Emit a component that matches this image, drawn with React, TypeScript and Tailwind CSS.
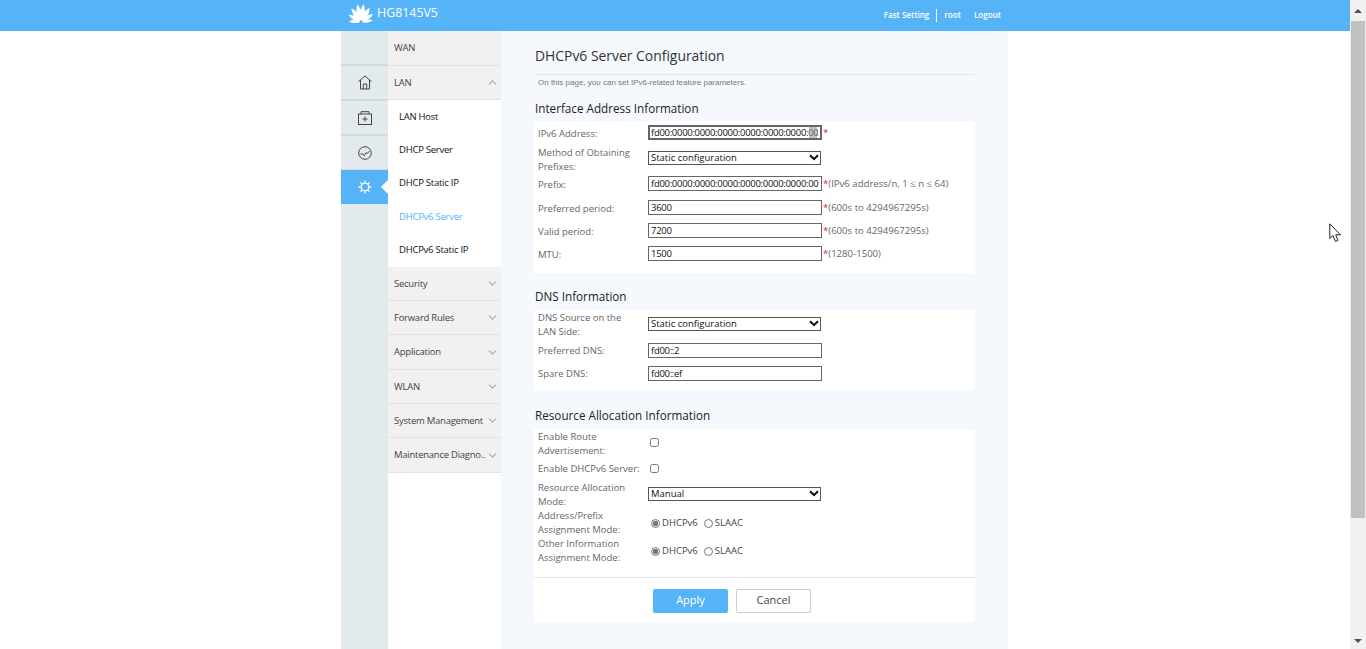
import React from 'react';
import { ChevronDown, ChevronUp } from 'lucide-react';

const font = { fontFamily: '"Open Sans", "Noto Sans", sans-serif' };

const petals = [
  { a: -84, s: 0.66 },
  { a: -58, s: 0.8 },
  { a: -33, s: 0.93 },
  { a: -10, s: 1 },
  { a: 10, s: 1 },
  { a: 33, s: 0.93 },
  { a: 58, s: 0.8 },
  { a: 84, s: 0.66 },
];

const HuaweiLogo = () => (
  <svg width="26" height="20" viewBox="0 0 26 20" fill="white" className="mb-[6px]">
    {petals.map((p) => (
      <path
        key={p.a}
        d="M0 -1.5 C-3 -5 -3.8 -12 -0.6 -18 C2.8 -13 3 -6 0 -1.5 Z"
        transform={`translate(13 19) rotate(${p.a}) scale(${p.s})`}
      />
    ))}
  </svg>
);

const HomeIcon = () => (
  <svg width="14" height="15" viewBox="0 0 14 15" fill="none" stroke="#444" strokeWidth="1">
    <path d="M0.5 6.5 L7 1 L13.5 6.5 M2.5 5 V14 H11.5 V5 M5.3 14 V9 H8.7 V14" />
  </svg>
);

const BoxIcon = () => (
  <svg width="14" height="14" viewBox="0 0 14 14" fill="none" stroke="#444" strokeWidth="1">
    <path d="M3 3 V0.7 H11 V3" />
    <rect x="0.5" y="3" width="13" height="10.5" />
    <path d="M7 5.5 V10.5 M4.5 8 H9.5" />
  </svg>
);

const GaugeIcon = () => (
  <svg width="14" height="14" viewBox="0 0 14 14" fill="none" stroke="#444" strokeWidth="1">
    <circle cx="7" cy="7" r="6.3" />
    <path d="M2.5 8 H5 L6.3 9.8 L8.3 6.5 L9.3 7.5 L11.5 5" />
  </svg>
);

const SunIcon = () => (
  <svg width="14" height="14" viewBox="0 0 14 14" fill="none" stroke="white" strokeWidth="1.3">
    <circle cx="7" cy="7" r="3.8" />
    <path d="M7 0.5 V2.5 M7 11.5 V13.5 M0.5 7 H2.5 M11.5 7 H13.5 M2.4 2.4 L3.8 3.8 M10.2 10.2 L11.6 11.6 M2.4 11.6 L3.8 10.2 M10.2 3.8 L11.6 2.4" />
  </svg>
);

const Rail = () => (
  <div className="w-[47px] bg-[#e3eaee] flex flex-col shrink-0">
    <div className="h-[35px] border-b-2 border-[#d5d9dc]" />
    <div className="h-[35px] border-b-2 border-[#d5d9dc] flex items-center justify-center"><HomeIcon /></div>
    <div className="h-[35px] border-b-2 border-[#d5d9dc] flex items-center justify-center"><BoxIcon /></div>
    <div className="h-[34px] border-b border-[#d5d9dc] flex items-center justify-center"><GaugeIcon /></div>
    <div className="h-[34px] bg-[#55b4f8] flex items-center justify-center relative">
      <SunIcon />
      <div className="absolute right-0 top-[10px] border-y-[7px] border-y-transparent border-r-[7px] border-r-white" />
    </div>
  </div>
);

const MenuHead = ({ label, h, up, none }: { label: string; h: string; up?: boolean; none?: boolean }) => (
  <div className={`${h} bg-[#f1f1f1] border-b border-[#e2e2e2] flex items-center justify-between pl-[6px] pr-[2px] text-[9.5px] tracking-[-0.25px] text-[#444]`}>
    <span className="whitespace-nowrap pt-[1px]">{label}</span>
    {none ? null : up ? <ChevronUp size={13} color="#aaa" className="shrink-0" /> : <ChevronDown size={13} color="#aaa" className="shrink-0" />}
  </div>
);

const SubItem = ({ label, active }: { label: string; active?: boolean }) => (
  <div className={`h-[33.4px] flex items-center pl-[11px] text-[9.5px] tracking-[-0.25px] ${active ? 'text-[#55b4f8]' : 'text-[#111]'}`}>{label}</div>
);

const Menu = () => (
  <div className="w-[113px] bg-white flex flex-col shrink-0">
    <MenuHead label="WAN" h="h-[35px]" none />
    <MenuHead label="LAN" h="h-[34px]" up />
    <div className="h-[167px] flex flex-col">
      <SubItem label="LAN Host" />
      <SubItem label="DHCP Server" />
      <SubItem label="DHCP Static IP" />
      <SubItem label="DHCPv6 Server" active />
      <SubItem label="DHCPv6 Static IP" />
    </div>
    <MenuHead label="Security" h="h-[34px]" />
    <MenuHead label="Forward Rules" h="h-[34px]" />
    <MenuHead label="Application" h="h-[35px]" />
    <MenuHead label="WLAN" h="h-[34px]" />
    <MenuHead label="System Management" h="h-[34px]" />
    <MenuHead label="Maintenance Diagno.." h="h-[35px]" />
  </div>
);

const Row = ({ label, h, children, top, flat }: { label: React.ReactNode; h: string; children?: React.ReactNode; top?: boolean; flat?: boolean }) => (
  <div className={`${h} flex items-center text-[9.5px] text-[#666]`}>
    <div className={`w-[114px] pl-[4px] pr-[10px] leading-[14px] shrink-0 ${flat ? '' : 'pt-[2px]'}`}>{label}</div>
    <div className={`flex items-center ${top ? 'mb-[3px]' : ''}`}>{children}</div>
  </div>
);

const Field = ({ value, focus }: { value: string; focus?: boolean }) => (
  <div className="relative">
    <input
      readOnly
      value={value}
      className={`block w-[174px] h-[15px] px-[2px] text-[9.5px] tracking-[-0.3px] text-[#111] bg-white border border-[#666] outline-none ${focus ? 'border-2 border-[#222] pl-[1px]' : ''}`}
      style={font}
    />
    {focus ? <div className="absolute left-[161px] top-[2px] w-[8px] h-[11px] bg-[#999]/60" /> : null}
  </div>
);

const Pick = ({ value }: { value: string }) => (
  <div className="relative">
    <select
      value={value}
      onChange={() => {}}
      className="block appearance-none w-[173px] h-[14px] py-0 px-[2px] leading-[12px] text-[9.5px] text-[#111] bg-white border border-[#555] outline-none"
      style={font}
    >
      <option>{value}</option>
    </select>
    <svg className="absolute right-[2px] top-[3px] pointer-events-none" width="10" height="7" viewBox="0 0 10 7" fill="none" stroke="#111" strokeWidth="2">
      <path d="M1 1.2 L5 5 L9 1.2" />
    </svg>
  </div>
);

const Hint = ({ star, text }: { star?: boolean; text?: string }) => (
  <span className="ml-[1px] pt-[1px] text-[9.6px] text-[#666] whitespace-nowrap">
    {star ? <span className="text-[#e02020]">*</span> : null}
    {text}
  </span>
);

const Radios = ({ name }: { name: string }) => (
  <div className="flex items-center ml-[3px] pt-[2px] text-[9.5px] text-[#444]">
    <input type="radio" name={name} readOnly checked className="w-[9px] h-[9px] m-0 accent-[#777]" />
    <span className="ml-[2px]">DHCPv6</span>
    <input type="radio" name={name} readOnly checked={false} className="w-[9px] h-[9px] m-0 ml-[6px]" />
    <span className="ml-[2px]">SLAAC</span>
  </div>
);

const Heading = ({ text, h, pb }: { text: string; h: string; pb: string }) => (
  <div className={`${h} ${pb} flex items-end text-[11.7px] leading-[16px] text-[#222] pl-[1px]`}>{text}</div>
);

const Content = () => (
  <div className="w-[507px] h-[618px] bg-[#f5f9fe] pl-[33px] pr-[33px] shrink-0">
    <div className="h-[44px] border-b border-[#e3e6ea] flex items-center text-[13.9px] text-[#333] pl-[1px] pt-[8px]">
      DHCPv6 Server Configuration
    </div>
    <div className="h-[15px] flex items-center pl-[4px] text-[8px] text-[#777]" style={{ fontFamily: '"Liberation Sans", sans-serif' }}>
      On this page, you can set IPv6-related feature parameters.
    </div>

    <Heading text="Interface Address Information" h="h-[31px]" pb="pb-[5px]" />
    <div className="bg-white h-[152px]">
      <Row label="IPv6 Address:" h="h-[24px]"><Field value="fd00:0000:0000:0000:0000:0000:0000:00" focus /><Hint star /></Row>
      <Row label="Method of Obtaining Prefixes:" h="h-[29px]" top flat><Pick value="Static configuration" /></Row>
      <Row label="Prefix:" h="h-[20px]"><Field value="fd00:0000:0000:0000:0000:0000:0000:00" /><Hint star text="(IPv6 address/n, 1 ≤ n ≤ 64)" /></Row>
      <Row label="Preferred period:" h="h-[27px]"><Field value="3600" /><Hint star text="(600s to 4294967295s)" /></Row>
      <Row label="Valid period:" h="h-[19px]"><Field value="7200" /><Hint star text="(600s to 4294967295s)" /></Row>
      <Row label="MTU:" h="h-[27px]"><Field value="1500" /><Hint star text="(1280-1500)" /></Row>
    </div>

    <Heading text="DNS Information" h="h-[37px]" pb="pb-[6px]" />
    <div className="bg-white h-[80px]">
      <Row label="DNS Source on the LAN Side:" h="h-[28px]"><Pick value="Static configuration" /></Row>
      <Row label="Preferred DNS:" h="h-[24px]"><Field value="fd00::2" /></Row>
      <Row label="Spare DNS:" h="h-[23px]" flat><Field value="fd00::ef" /></Row>
    </div>

    <Heading text="Resource Allocation Information" h="h-[39px]" pb="pb-[6px]" />
    <div className="bg-white h-[193px] pt-[1px]">
      <Row label="Enable Route Advertisement:" h="h-[28px]" flat><input type="checkbox" className="w-[9px] h-[9px] m-0 ml-[2px] mb-[4px]" /></Row>
      <Row label={<span className="whitespace-nowrap">Enable DHCPv6 Server:</span>} h="h-[21px]" flat><input type="checkbox" className="w-[9px] h-[9px] m-0 ml-[2px]" /></Row>
      <div className="h-[1px]" />
      <Row label="Resource Allocation Mode:" h="h-[28px]"><Pick value="Manual" /></Row>
      <Row label="Address/Prefix Assignment Mode:" h="h-[28px]"><Radios name="addr" /></Row>
      <Row label="Other Information Assignment Mode:" h="h-[28px]"><Radios name="other" /></Row>
      <div className="mt-[13px] border-t border-[#e5e5e5] h-[45px] flex items-center pl-[119px] gap-[8px] pt-[1px]">
        <button className="w-[75px] h-[24px] rounded-[2px] bg-[#55b4f8] text-white text-[11px]" style={font}>Apply</button>
        <button className="w-[75px] h-[24px] rounded-[2px] bg-white border border-[#ccc] text-[#444] text-[11px]" style={font}>Cancel</button>
      </div>
    </div>
  </div>
);

const Scrollbar = () => (
  <div className="w-[16px] h-[649px] bg-[#f1f1f1] flex flex-col shrink-0 relative">
    <div className="h-[21px] flex items-center justify-center">
      <div className="border-x-[4px] border-x-transparent border-b-[4px] border-b-[#505050]" />
    </div>
    <div className="h-[497px] mx-[1px] bg-[#c1c1c1]" />
    <div className="flex-1 flex items-end justify-center pb-[6px]">
      <div className="border-x-[4px] border-x-transparent border-t-[4px] border-t-[#505050]" />
    </div>
  </div>
);

const App = () => {
  return (
    <div className="h-[649px] w-full bg-white flex overflow-hidden relative" style={font}>
      <div className="flex-1 flex flex-col min-w-0">
        {/* Top bar */}
        <div className="h-[31px] bg-[#55b4f8] shrink-0 pl-[341px]">
          <div className="w-[667px] h-full flex items-center text-white">
            <div className="ml-[7px] flex items-center">
              <HuaweiLogo />
              <span className="ml-[3px] text-[12.4px] mb-[4px]">HG8145V5</span>
            </div>
            <div className="ml-auto mr-[7px] flex items-center text-[8.1px] font-semibold mb-[1px]">
              <span>Fast Setting</span>
              <span className="mx-[7px] w-px h-[13px] bg-white" />
              <span>root</span>
              <span className="ml-[13px]">Logout</span>
            </div>
          </div>
        </div>
        {/* Body */}
        <div className="flex-1 pl-[341px] flex">
          <Rail />
          <Menu />
          <Content />
        </div>
      </div>
      <Scrollbar />
      {/* Mouse pointer */}
      <svg className="absolute left-[1329px] top-[223px]" width="13" height="20" viewBox="0 0 13 20" fill="white" stroke="#222" strokeWidth="1">
        <path d="M0.8 0.8 V15.5 L4 12.5 L6.5 18.5 L9 17.3 L6.7 11.8 H11.5 Z" />
      </svg>
    </div>
  );
};

export default App;
